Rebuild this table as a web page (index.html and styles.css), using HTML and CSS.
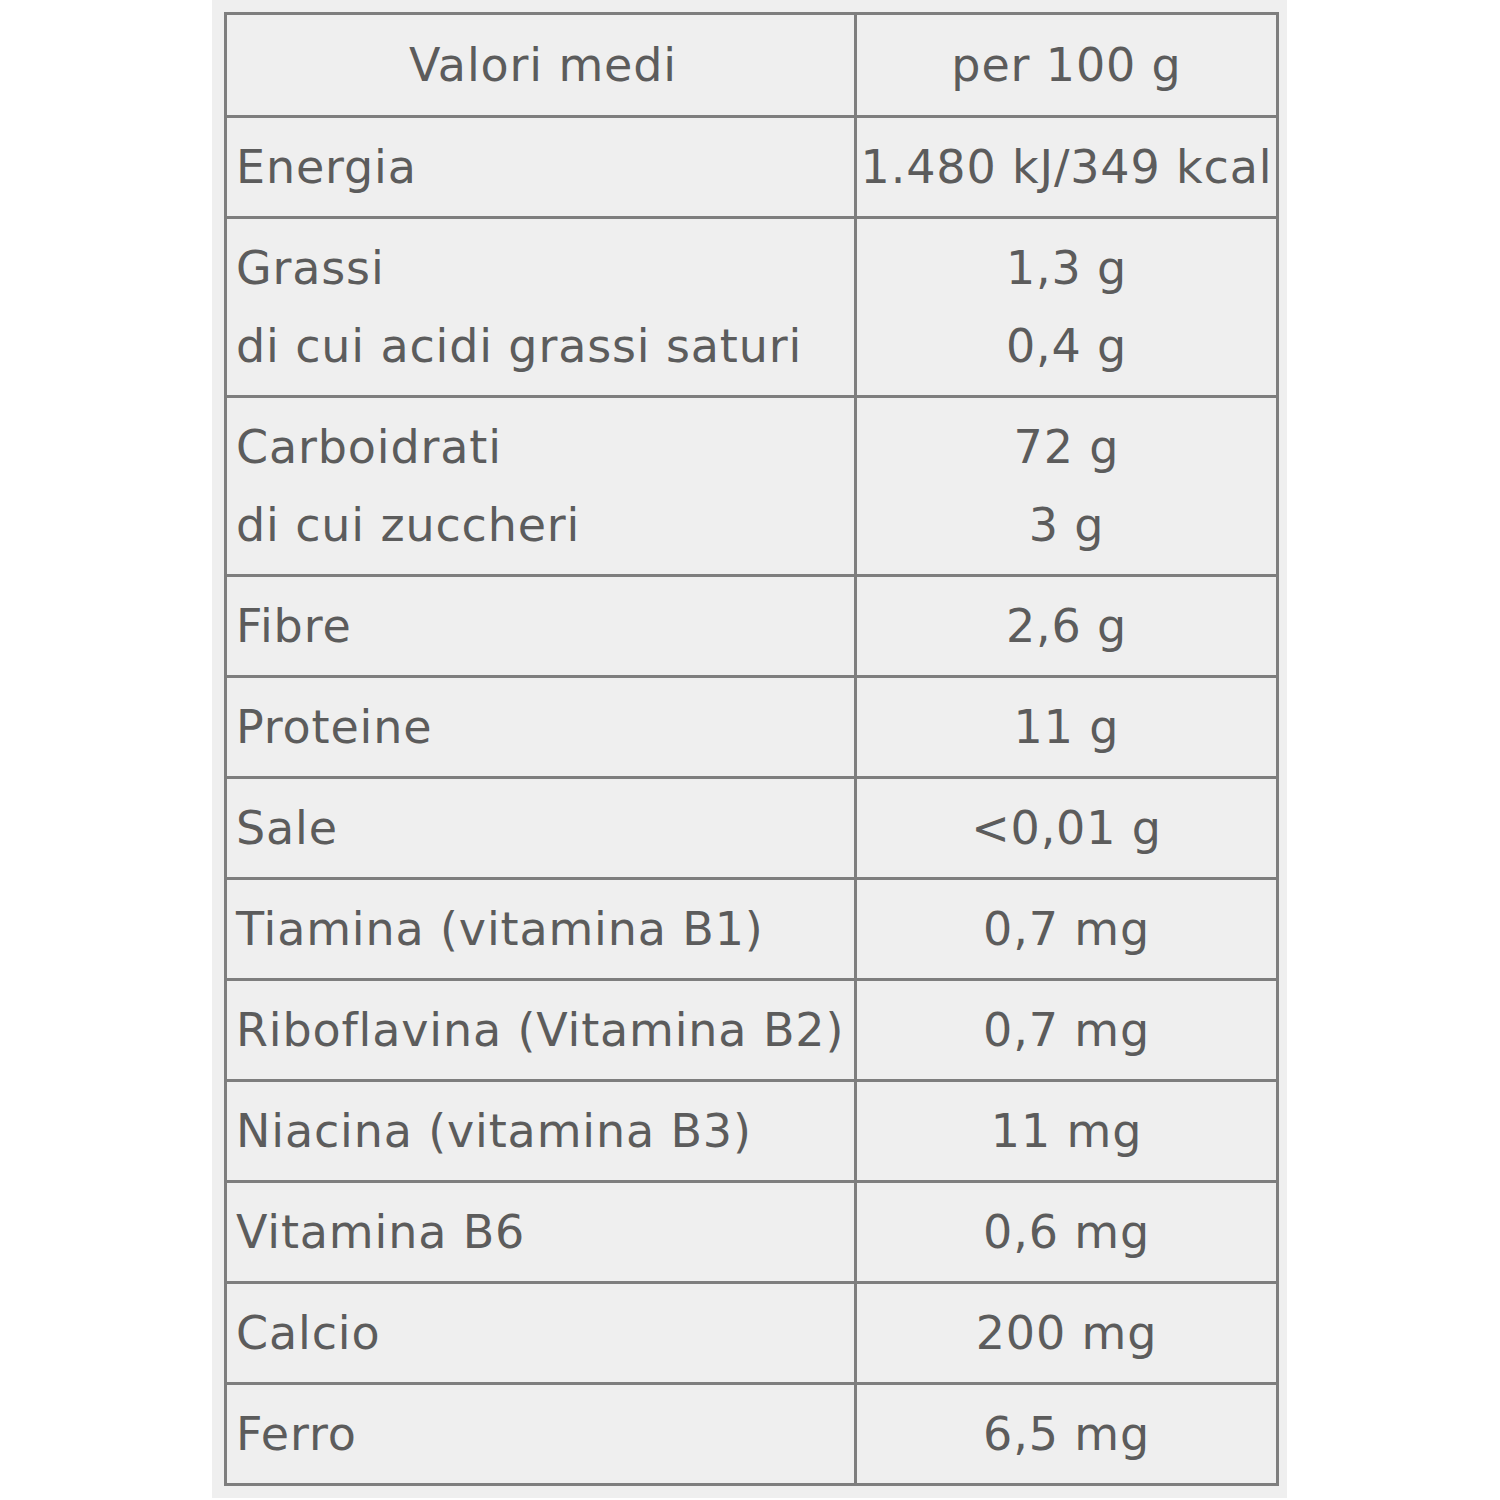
FILE: index.html
```html
<!DOCTYPE html>
<html lang="it">
<head>
<meta charset="utf-8">
<title>Valori nutrizionali</title>
<link rel="stylesheet" href="styles.css">
</head>
<body>
<div class="panel">
  <div class="table">
    <div class="cell head">Valori medi</div>
    <div class="cell head val">per 100 g</div>

    <div class="cell">Energia</div>
    <div class="cell val">1.480 kJ/349 kcal</div>

    <div class="cell">Grassi<br>di cui acidi grassi saturi</div>
    <div class="cell val">1,3 g<br>0,4 g</div>

    <div class="cell">Carboidrati<br>di cui zuccheri</div>
    <div class="cell val">72 g<br>3 g</div>

    <div class="cell">Fibre</div>
    <div class="cell val">2,6 g</div>

    <div class="cell">Proteine</div>
    <div class="cell val">11 g</div>

    <div class="cell">Sale</div>
    <div class="cell val">&lt;0,01 g</div>

    <div class="cell">Tiamina (vitamina B1)</div>
    <div class="cell val">0,7 mg</div>

    <div class="cell">Riboflavina (Vitamina B2)</div>
    <div class="cell val">0,7 mg</div>

    <div class="cell">Niacina (vitamina B3)</div>
    <div class="cell val">11 mg</div>

    <div class="cell">Vitamina B6</div>
    <div class="cell val">0,6 mg</div>

    <div class="cell">Calcio</div>
    <div class="cell val">200 mg</div>

    <div class="cell">Ferro</div>
    <div class="cell val">6,5 mg</div>
  </div>
</div>
</body>
</html>
```

FILE: styles.css
```css
html, body {
  margin: 0;
  padding: 0;
  background: #ffffff;
}

.panel {
  margin-left: 212px;
  width: 1075px;
  height: 1498px;
  box-sizing: border-box;
  padding: 12px 8px 0 12px;
  background: #efefef;
}

.table {
  display: grid;
  grid-template-columns: 630px 422px;
  width: 1055px;
  border-top: 3px solid #7e7e7e;
  border-left: 3px solid #7e7e7e;
  box-sizing: border-box;
  font-family: "DejaVu Sans", "Noto Sans", sans-serif;
  font-size: 46px;
  letter-spacing: 0.85px;
  line-height: 78px;
  color: #5c5c5c;
}

.cell {
  box-sizing: border-box;
  border-right: 3px solid #7e7e7e;
  border-bottom: 3px solid #7e7e7e;
  padding: 10px 4px 10px 9px;
  white-space: nowrap;
}

.head {
  text-align: center;
  padding-top: 11px;
  padding-bottom: 11px;
}

.val {
  text-align: center;
  padding-left: 0;
  padding-right: 0;
}
```
